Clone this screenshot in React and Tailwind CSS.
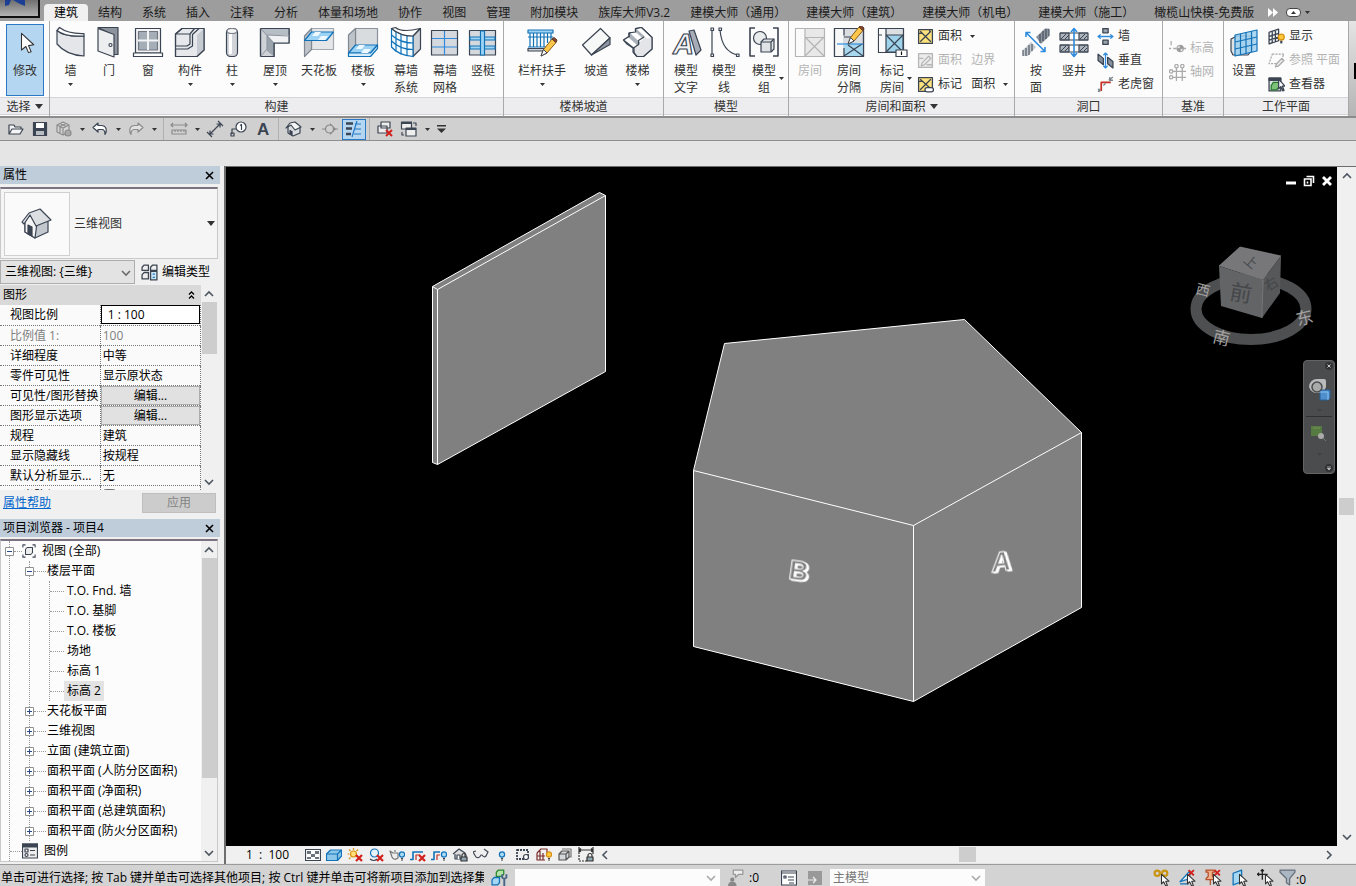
import { useState } from "react";

const INK = "#3b4452";
const BLUE = "#1272b8";

function Svg({ size = 32, box = 32, children, className = "" }) {
  return (
    <svg
      width={size}
      height={size}
      viewBox={`0 0 ${box} ${box}`}
      fill="none"
      stroke={INK}
      strokeWidth="1.2"
      strokeLinejoin="round"
      className={`shrink-0 ${className}`}
      aria-hidden="true"
    >
      {children}
    </svg>
  );
}

function Pencil() {
  return (
    <g strokeWidth="1">
      <path d="M15 30l2.5-6.5L26 13l4 3.5-9 10.5z" fill="#ffc74a" stroke="#8a5a1d" />
      <path d="M26 13l2-1.5 3 2.5-1 2.5z" fill="#8c4a2f" stroke="#5d3424" />
      <path d="M15 30l2.5-6.5 3.5 3.5z" fill="#fff" stroke="#3b4452" />
    </g>
  );
}

const ribbonIcons = {
  modify: <path d="M12 5v19l5-4 3 7 3-1-3-7 6-1z" fill="#fff" stroke="#333" />,
  wall: (
    <>
      <path d="M2 4.5Q9 11 29 10V30Q11 29 2 18z" fill="#e4e6e9" />
      <path d="M2 4.5L4.5 1.5Q13 8 29 7.5V10Q10 11 2 4.5z" fill="#fff" />
    </>
  ),
  door: (
    <>
      <path d="M5 1.5h20v27h-5V9z" fill="#8d949d" />
      <path d="M5 2.5l16 6V31L5 25z" fill="#eceef0" />
      <circle cx="17.5" cy="19" r="1.5" fill="#fff" />
    </>
  ),
  window: (
    <>
      <path d="M3.5 2.5h25V27h-25z" fill="#f4f4f5" />
      <path d="M6.5 5.5h19V24h-19z" fill="#a5adb7" stroke="#6f7883" />
      <path d="M16 5v19M6 14.5h20" stroke="#f2f3f4" strokeWidth="2" />
      <path d="M1.5 27h29v3.5h-29z" fill="#fff" />
    </>
  ),
  component: (
    <>
      <path d="M1.5 8L8 2.5h22V24l-7 6.5H1.5z" fill="#e6e8eb" />
      <path d="M23 9l7-6.5V24l-7 6.5z" fill="#c6cbd1" stroke="none" />
      <path d="M1.5 8L8 2.5h12.5L16 8v10l-3 2H1.5V8H16M1.5 23h12l5-3V8.5L25 2.5h5V24l-7 6.5H1.5z" />
    </>
  ),
  column: (
    <>
      <rect x="10.5" y="2.5" width="11" height="28" rx="4" fill="#d0d4d9" />
      <path d="M14.5 8v20" stroke="#fff" strokeWidth="3" />
      <ellipse cx="16" cy="5" rx="5" ry="2.5" fill="#f7f7f8" stroke="#7a828d" />
    </>
  ),
  roof: (
    <>
      <path d="M1.5 2.5H30V17H15v13.5H1.5z" fill="#cfd3d8" />
      <path d="M1.5 2.5L8 9h22V2.5z" fill="#b7bdc5" stroke="none" />
      <path d="M8 9h22v8H15z" fill="#f1f2f3" stroke="none" />
      <path d="M8 9l7 8v13.5L8 25z" fill="#9ba3ad" stroke="none" />
      <path d="M1.5 2.5H30V17H15v13.5H1.5z" />
      <path d="M1.5 2.5L15 17M8 9l22 1M8 9v14l-6.5 7.5" stroke="#8a929c" strokeWidth="1" />
    </>
  ),
  ceiling: (
    <>
      <path d="M8.5 2.5h22v21h-22z" fill="#e4e6e8" stroke="#a2a8b0" />
      <path d="M1.5 10l7-7.5v21l-7 7z" fill="#c0c5cb" stroke="#7f8791" />
      <path d="M1.5 14.5L8.5 6h22l-7 8.5z" fill="#9cd2f4" stroke={BLUE} />
      <path d="M9 10l3-4h6l-3 4zM15 14l3-4h7l-3 4z" fill="#eef8ff" stroke="none" />
    </>
  ),
  floor: (
    <>
      <path d="M8.5 2.5h22v18h-22z" fill="#d9dcdf" stroke="#8a929c" />
      <path d="M1.5 9l7-6.5v18l-7 8z" fill="#bfc4ca" stroke="#7f8791" />
      <path d="M1.5 27l7-8h22l-7 8z" fill="#9cd2f4" stroke={BLUE} />
      <path d="M1.5 27v3.5h22l7-8V19l-7 8z" fill="#d4ecfb" stroke={BLUE} />
      <path d="M9 23l3-4h6l-3 4zM14 27l3-4h7l-3 4z" fill="#eef8ff" stroke="none" />
    </>
  ),
  curtain: (
    <>
      <path d="M23 10l7.5-7.5V23L23 30.5z" fill="#cdd1d6" />
      <path d="M1.5 2.5Q10 10 23 10V30.5Q8 29 1.5 21z" fill="#f3fbff" stroke={BLUE} />
      <path d="M6 6v19.5M11 8.5v20M17 9.5V30M1.5 9Q10 17 23 17M1.5 15Q10 23.5 23 23.5" stroke={BLUE} />
      <path d="M1.5 2.5l4-1Q12 7 30 2.5L23 10Q10 10 1.5 2.5z" fill="#fff" />
    </>
  ),
  curtainGrid: (
    <>
      <path d="M2.5 4.5h26V29h-26z" fill="#d5d8dc" />
      <path d="M15.5 5v24M3 12.5h25M3 21h25" stroke="#2e8bdd" />
    </>
  ),
  mullion: (
    <>
      <path d="M2.5 4.5h26V29h-26z" fill="#d5d8dc" />
      <path d="M3 11h25v3H3zM3 20h25v3H3z" fill="#9fd4f5" stroke={BLUE} />
      <path d="M13.5 5h4v24h-4z" fill="#9fd4f5" stroke={BLUE} />
    </>
  ),
  railing: (
    <>
      <path d="M2 4h25v3H2zM2 11h25M2 21h18" fill="#9fd4f5" stroke={BLUE} />
      <path d="M4 7v14M7.5 7v14M11 7v14M14.5 7v14M18 7v14M21.5 7v10M25 7v7" stroke={BLUE} />
      <path d="M2 22.5h17V25H2z" fill="#cdd1d6" />
      <Pencil />
    </>
  ),
  ramp: (
    <>
      <path d="M2.5 19L20.5 2.5 30 12 11.5 29z" fill="#f6f7f7" />
      <path d="M30 12v6.5L11.5 29z" fill="#8f97a1" />
    </>
  ),
  stair: (
    <>
      <path d="M1.5 14L7 10.500V7l6.5-1V2.500l6-1 10.500 10V23l-8.500 7.500H15L11 26v-4l-6-4z" fill="#aab1b9" />
      <path d="M12 25v-3l6-4v-4l6-4 6 1.500V23l-8.500 7.5H15z" fill="#e3e5e8" stroke="none" />
      <path d="M1.5 14L6 11l9 8-3.500 3zM8.500 7.500l4-2.500 9 8-4 3zM15 3.500l4-2L30 11.500l-5 1z" fill="#fff" stroke="none" />
      <path d="M1.500 14l10 8 5-3.500v-4l5.500-3.500M1.5 14L7 10.500V7l6.5-1V2.5l6-1L30 11.500V23l-8.500 7.5H15L12 27v-5" />
    </>
  ),
  modelText: (
    <>
      <path d="M19 5l5-1 7 20-5 5z" fill="#a6adb6" />
      <text x="3" y="28" fontSize="29" fontWeight="700" fontStyle="italic" fill="#f3f4f5" className="font-['Liberation_Sans',sans-serif]">A</text>
    </>
  ),
  modelLine: (
    <>
      <path d="M4 4v25M12 4Q14 26 30 29" />
      <path d="M3 2h2.5v2.5H3zM3 28h2.5v2.5H3zM11 2h2.5v2.5H11zM28.5 28H31v2.5h-2.5z" fill="#fff" />
    </>
  ),
  modelGroup: (
    <>
      <path d="M7 2H2v28h5M25 2h5v28h-5" strokeWidth="1.6" />
      <circle cx="12" cy="12" r="6.5" fill="#e9ebed" />
      <path d="M13 16l3-3h10v10l-3 3H13z" fill="#e0e3e6" />
      <path d="M13 16h10v10M23 16l3-3" />
    </>
  ),
  room: (
    <g stroke="#b4b4b4">
      <path d="M1.5 2.5h29v28h-29z" fill="#e8e8e8" />
      <path d="M2 3h9v9H2zM2 12h8v18H2z" fill="#fafafa" stroke="none" />
      <path d="M11 2.5v9M11 26v4M11 11.5h19M11 11l19 19M30 11L11 30M11 11v19" />
    </g>
  ),
  roomSep: (
    <>
      <path d="M1.5 2.5h29v28h-29z" fill="#d9dde0" />
      <path d="M2 3h8v27H2z" fill="#f7f7f7" stroke="none" />
      <path d="M11 18h19v12H11z" fill="#a7d8ee" stroke="none" />
      <path d="M1.5 2.5h29v28h-29zM11 2.5v7M11 22v8M11 11h8M11 30l18-12M15 19l15 11" />
      <path d="M4 18h26" stroke="#2e8bdd" />
      <g transform="translate(0 -12)"><Pencil /></g>
    </>
  ),
  roomTag: (
    <>
      <path d="M2.5 2.5h25v24h-25z" fill="#dde0e3" />
      <path d="M3 3h7v23H3z" fill="#f9f9f9" stroke="none" />
      <path d="M10 9h17v17H10z" fill="#9fd3eb" />
      <path d="M10 2.5V9M10 9l17 17M27 9L10 26M3 9h3" />
      <rect x="20" y="24" width="11" height="6.5" fill="#fff" />
      <path d="M25.5 25.5V29" stroke="#111" />
    </>
  ),
  byFace: (
    <>
      <path d="M16 11l9-8.5h4v8L21 18z" fill="#8c949d" stroke="none" />
      <path d="M3 24l8-8 5 5-8 9H3z" fill="#c4c9ce" stroke="none" />
      <path d="M20 8v9M23 5v10M26 3v10M29 3v7M3 24v6M6 22v8M9 19v10M12 18v7" strokeWidth="1" />
      <path d="M6 6.5l19 19M6 11V6.5h4.5M25 21v4.5h-4.5" stroke="#2e8bdd" strokeWidth="1.6" />
    </>
  ),
  shaft: (
    <>
      <path d="M2 7h9v7H2zM2 19h9v7H2zM21 7h9v7h-9zM21 19h9v7h-9z" fill="#aeb4bb" />
      <path d="M2 7h28M2 14h28M2 19h28M2 26h28" />
      <path d="M3 13l5-5M7 13l4-4M3 25l5-5M7 25l4-4M22 13l5-5M26 13l3-3M22 25l5-5M26 25l3-3" strokeWidth="1" />
      <path d="M16 3v27M13 6l3-3.5L19 6M13 27l3 3.5 3-3.5" stroke="#2e8bdd" strokeWidth="1.6" />
    </>
  ),
  workplane: (
    <>
      <path d="M3 13l6-3h15v14l-4 5H5l-2-4z" fill="#dfe3e6" />
      <path d="M7 9L29 4v21L7 30z" fill="#9fd0ee" fillOpacity=".85" stroke={BLUE} />
      <path d="M12.5 8v21M18 6.5V28M23.5 5v21M7 16l22-5M7 23l22-5" stroke={BLUE} />
    </>
  ),
};

const smallIcons = {
  area: (
    <>
      <path d="M1.5 1.5h13v13h-13z" fill="#ffe27a" />
      <path d="M1.5 5h4M12 1.5V4M3 3l10 10M13 3L3 13" />
    </>
  ),
  areaEdge: (
    <g stroke="#b5b5b5">
      <path d="M1.5 1.5h13v13h-13z" fill="#ececec" />
      <path d="M2 6h4M4 13l1-3 6-6 2 2-6 6zM9 12h5" />
    </g>
  ),
  areaTag: (
    <>
      <path d="M1.5 1.5h13v13h-13z" fill="#ffe27a" />
      <path d="M3 3l9 8M13 3L3 13M1.5 5h4" />
      <rect x="7.5" y="11" width="8" height="4" rx="2" fill="#fff" />
    </>
  ),
  wallOpening: (
    <>
      <path d="M5.5.5h5v4h-5zM5.5 11.5h5v4h-5z" fill="#9aa2ab" />
      <path d="M1 8h14M3.5 6L1 8l2.5 2M12.5 6L15 8l-2.5 2" stroke="#2e8bdd" />
    </>
  ),
  vertical: (
    <>
      <path d="M1 2l5 4v6L1 8zM10 5l5 4v6l-5-4z" fill="#87909b" />
      <path d="M8 1v14M6 3l2-2 2 2M6 13l2 2 2-2" stroke="#2e8bdd" />
    </>
  ),
  dormer: (
    <>
      <path d="M1 15l2-3M6 9l2-2M11 4l4-3M1 12l2 3M12 1v3h3" stroke="#7c848d" />
      <path d="M4 14V6h9" stroke="#c42f22" strokeWidth="1.6" />
    </>
  ),
  level: (
    <g stroke="#aaa">
      <path d="M0 8h2M4 8h3M13 8h3M2 1v4" />
      <circle cx="10.5" cy="8" r="3" />
      <path d="M10.5 5v6M7.5 8h6" />
      <path d="M10.5 5a3 3 0 013 3h-3zM10.5 11a3 3 0 01-3-3h3z" fill="#999" stroke="none" />
    </g>
  ),
  gridLine: (
    <g stroke="#aaa">
      <circle cx="7" cy="2" r="1.6" />
      <circle cx="12.5" cy="2" r="1.6" />
      <circle cx="2" cy="7" r="1.6" />
      <circle cx="2" cy="12.5" r="1.6" />
      <path d="M7 3.5V16M12.5 3.5V16M3.5 7H16M3.5 12.5H16" />
    </g>
  ),
  show: (
    <>
      <path d="M1 4l9-3v11l-9 3zM4 3v11M7 2v11M1 8l9-3M1 11.5l9-3" fill="#f1f2f3" />
      <circle cx="12.5" cy="8.5" r="2.8" fill="#ffc93a" stroke="#d98f12" />
      <path d="M12.5 12v2.5" strokeWidth="2" />
    </>
  ),
  refPlane: (
    <g stroke="#aaa">
      <path d="M4 2h11l-4 9H1z" strokeDasharray="2 1" />
      <path d="M7 14l1-3 5-5 2 2-5 5z" fill="#ececec" />
    </g>
  ),
  viewer: (
    <>
      <path d="M1 2h11v12H1z" fill="#dfe3e6" />
      <path d="M1 2h11v2H1z" fill={INK} />
      <path d="M3 9l2-3h5v5l-2 2H3z" fill="#7fc07a" stroke="#247a2a" />
      <path d="M10 3v9l2-2 2 4 1-.5-1.5-4H16z" fill="#fff" />
    </>
  ),
};

const Lock = () => (
  <>
    <path d="M10 10V8.5a2 2 0 014 0V10" stroke="#333" />
    <path d="M9 10h6v4H9z" fill="#8fa7b0" stroke="#333" />
  </>
);
const Cross = () => <path d="M9 8l6 6M15 8l-6 6" stroke="#d0211c" strokeWidth="2.2" />;
const Bulb = ({ x = 0, color = "#a9dcf6", line = "#1272b8" }) => (
  <g transform={`translate(${x} 0)`}>
    <circle cx="12" cy="7.5" r="2.6" fill={color} stroke={line} />
    <path d="M11 11.5h2M11 13h2" stroke="#444" />
  </g>
);

const viewIcons = [
  ["详细程度", <><path d="M.5 2.5h15v11H.5z" fill="#fff" /><path d="M2 4h4v3H2zM10 4h4v3h-4zM6 7h4v3H6zM2 10h4v2H2zM10 10h4v2h-4z" fill="#6a727c" stroke="none" /></>],
  ["视觉样式", <><path d="M.5 7l4-4h11v6l-4 4.5H.5z" fill="#8cc8ea" stroke={BLUE} /><path d="M.5 7h11v6M11.5 7l4-4" stroke={BLUE} /></>],
  ["日光路径", <><circle cx="6.5" cy="7" r="3" fill="#ffe27a" stroke="#dc9310" /><path d="M6.5 1v2M.5 7h2M2 2.5l1.5 1.5M11 2.5L9.5 4M2 12l1.5-1.5" stroke="#dc9310" /><Cross /></>],
  ["阴影", <><circle cx="6.5" cy="6" r="4" fill="#e6f4fd" stroke={BLUE} /><path d="M2 12q4 3 7 0" /><Cross /></>],
  ["渲染对话框", <><path d="M1 4l3 2h5v5q-4 3-6-1zM6 5V3" fill="#eee" stroke="#777" /><Bulb x={1} /></>],
  ["裁剪视图", <><path d="M0 12.5h3V5h10M3 12V8" stroke={BLUE} strokeWidth="1.6" /><path d="M6 13V8h4" stroke="#c42f22" /><Cross /></>],
  ["显示裁剪区域", <><path d="M0 12.5h3V5h6" stroke={BLUE} strokeWidth="1.6" /><path d="M6 13V8h3" stroke="#c42f22" /><Bulb x={1} /></>],
  ["锁定三维视图", <><path d="M1 7l6-5 6 4v6H3V7" fill="#ddd" /><path d="M5 12V8h3v4" fill="#fff" /><Lock /></>],
  ["临时隐藏", <path d="M0 5l3 5q3 2 5-2h1q2 3 4 1l2-4-4-3M0 5l3-1" stroke="#444b55" />],
  ["显示隐藏的图元", <Bulb x={-4} />],
  ["临时视图属性", <><path d="M2 3h11v9H2z" fill="#eee" strokeDasharray="2 1" strokeWidth="1.8" /><circle cx="11" cy="10" r="2.5" fill="#fff" /></>],
  ["显示分析模型", <><path d="M1 6l4-4h6v7M1 6v7h8M1 9h8M4 4v9M7 6v7" stroke="#7b2e2a" /><Bulb color="#ffc93a" line="#d98f12" x={1} /></>],
  ["高亮显示位移集", <><path d="M5 2h9v8h-3" fill="#eee" stroke="#777" /><path d="M2 7l3-3h7v6l-3 3H2zM2 7h7v6M9 7l3-3" fill="#d5d8db" stroke="#555" /></>],
  ["显示约束", <><path d="M1 0v7M15 0v7M1 3h14M3 1.5L1 3l2 1.5M13 1.5L15 3l-2 1.5" stroke="#333" /><path d="M1 8v6h8" stroke="#333" strokeDasharray="2 1" /><Lock /></>],
];

const Arrow = ({ className = "" }) => (
  <svg width="5" height="3" viewBox="0 0 5 3" className={`shrink-0 ${className}`} aria-hidden="true">
    <path d="M0 0h5L2.5 3z" fill="#333" />
  </svg>
);

const BigArrow = () => (
  <svg width="8" height="5" viewBox="0 0 8 5" className="shrink-0" aria-hidden="true">
    <path d="M0 0h8L4 5z" fill="#333" />
  </svg>
);

const Chevron = ({ dir = "down", color = "#4d5560" }) => {
  const paths = { up: "M1 7l4-4 4 4", down: "M1 3l4 4 4-4", left: "M7 1L3 5l4 4", right: "M3 1l4 4-4 4" };
  return (
    <svg width="10" height="10" viewBox="0 0 10 10" fill="none" stroke={color} strokeWidth="1.6" aria-hidden="true">
      <path d={paths[dir]} />
    </svg>
  );
};

const tabs = [
  "建筑", "结构", "系统", "插入", "注释", "分析", "体量和场地", "协作", "视图", "管理", "附加模块",
  "族库大师V3.2", "建模大师（通用）", "建模大师（建筑）", "建模大师（机电）", "建模大师（施工）", "橄榄山快模-免费版",
];

function BigButton({ icon, lines, width, drop, sideDrop, disabled }) {
  return (
    <button
      type="button"
      disabled={disabled}
      className={`${width} shrink-0 flex flex-col items-center pt-[5px] ${disabled ? "text-[#b4b4b4]" : "text-[#333]"}`}
    >
      <Svg>{ribbonIcons[icon]}</Svg>
      <span className="relative mt-1 flex flex-col whitespace-nowrap leading-[17px]">
        {lines.map((l) => (
          <span key={l}>{l}</span>
        ))}
        {sideDrop && <Arrow className="absolute -right-2 bottom-4" />}
      </span>
      {drop && <Arrow className="mt-1" />}
    </button>
  );
}

function SmallButton({ icon, label, disabled, drop }) {
  return (
    <button
      type="button"
      disabled={disabled}
      className={`flex h-6 items-center gap-1 whitespace-pre ${disabled ? "text-[#b4b4b4]" : "text-[#333]"}`}
    >
      <Svg size={17} box={16}>{smallIcons[icon]}</Svg>
      {label}
      {drop && <Arrow className="ml-1" />}
    </button>
  );
}

function Panel({ title, drop, className = "", children }) {
  return (
    <section className={`flex shrink-0 flex-col border-r border-[#a9a9a9] ${className}`}>
      <div className="flex h-[76px]">{children}</div>
      <h2 className="flex h-[18px] items-center justify-center gap-1 border-y border-[#d5d5d8] bg-[#ededef] pt-px text-[#333]">
        {title}
        {drop && <BigArrow />}
      </h2>
    </section>
  );
}

function Ribbon() {
  const [active, setActive] = useState("建筑");
  return (
    <header>
      <nav className="relative flex h-[21px] items-end bg-[#9d9d9d] pl-11">
        <button
          type="button"
          aria-label="应用程序菜单"
          className="absolute left-0 top-0 h-[18px] w-10 overflow-hidden border-b-2 border-r-2 border-[#111] bg-linear-to-b from-[#6f6f6f] to-[#b3b3b3]"
        >
          <svg width="38" height="16" viewBox="0 0 38 16" className="block" aria-hidden="true">
            <path d="M5 0h6l-2 5-4 1zM13 0h12v6l-5-2z" fill="#1c3f94" />
          </svg>
        </button>
        {tabs.map((t) => (
          <button
            type="button"
            key={t}
            onClick={() => setActive(t)}
            className={`h-[17px] shrink-0 whitespace-nowrap px-2.5 leading-[17px] ${
              t === active ? "rounded-t-sm bg-[#f0f0f0] text-black" : "text-[#1b1b1b]"
            }`}
          >
            {t}
          </button>
        ))}
        <span className="ml-1 flex h-[17px] items-center gap-1">
          <svg width="10" height="9" viewBox="0 0 10 9" aria-hidden="true"><path d="M0 0l5 4.5L0 9zM5 0l5 4.5L5 9z" fill="#fff" /></svg>
          <button type="button" aria-label="最小化功能区" className="ml-1 flex h-[9px] w-[15px] items-center justify-center rounded-sm border border-[#444] bg-white">
            <Arrow className="rotate-180" />
          </button>
          <Arrow />
        </span>
      </nav>

      <div className="flex h-[97px] overflow-hidden border-b-2 border-[#8b8b8b] bg-[#fcfcfc]">
        <Panel title="选择" drop className="w-[50px]">
          <button
            type="button"
            className="ml-1.5 mt-[3px] flex h-[72px] w-[38px] flex-col items-center border border-[#2b78c5] bg-[#b5d6f0] pt-1 text-[#333]"
          >
            <Svg size={28}>{ribbonIcons.modify}</Svg>
            <span className="mt-1.5">修改</span>
          </button>
        </Panel>
        <Panel title="构建">
          <BigButton icon="wall" lines={["墙"]} width="w-[41px]" drop />
          <BigButton icon="door" lines={["门"]} width="w-9" />
          <BigButton icon="window" lines={["窗"]} width="w-[42px]" />
          <BigButton icon="component" lines={["构件"]} width="w-[42px]" drop />
          <BigButton icon="column" lines={["柱"]} width="w-[42px]" drop />
          <BigButton icon="roof" lines={["屋顶"]} width="w-11" drop />
          <BigButton icon="ceiling" lines={["天花板"]} width="w-11" />
          <BigButton icon="floor" lines={["楼板"]} width="w-11" drop />
          <BigButton icon="curtain" lines={["幕墙", "系统"]} width="w-[42px]" />
          <BigButton icon="curtainGrid" lines={["幕墙", "网格"]} width="w-9" />
          <BigButton icon="mullion" lines={["竖梃"]} width="w-10" />
        </Panel>
        <Panel title="楼梯坡道">
          <BigButton icon="railing" lines={["栏杆扶手"]} width="w-[76px]" drop />
          <BigButton icon="ramp" lines={["坡道"]} width="w-8" />
          <BigButton icon="stair" lines={["楼梯"]} width="w-[51px]" drop />
        </Panel>
        <Panel title="模型">
          <BigButton icon="modelText" lines={["模型", "文字"]} width="w-11" />
          <BigButton icon="modelLine" lines={["模型", "线"]} width="w-8" />
          <BigButton icon="modelGroup" lines={["模型", "组"]} width="w-12" sideDrop />
        </Panel>
        <Panel title="房间和面积" drop className="w-[226px]">
          <BigButton icon="room" lines={["房间"]} width="w-[42px]" disabled />
          <BigButton icon="roomSep" lines={["房间", "分隔"]} width="w-9" />
          <BigButton icon="roomTag" lines={["标记", "房间"]} width="w-[50px]" sideDrop />
          <div className="flex flex-col pt-[3px]">
            <SmallButton icon="area" label="面积" drop />
            <SmallButton icon="areaEdge" label="面积   边界" disabled />
            <SmallButton icon="areaTag" label="标记   面积" drop />
          </div>
        </Panel>
        <Panel title="洞口" className="w-[148px]">
          <BigButton icon="byFace" lines={["按", "面"]} width="w-[42px]" />
          <BigButton icon="shaft" lines={["竖井"]} width="w-[34px]" />
          <div className="flex flex-col pl-1.5 pt-[3px]">
            <SmallButton icon="wallOpening" label="墙" />
            <SmallButton icon="vertical" label="垂直" />
            <SmallButton icon="dormer" label="老虎窗" />
          </div>
        </Panel>
        <Panel title="基准" className="w-[61px]">
          <div className="flex flex-col pl-1.5 pt-[15px]">
            <SmallButton icon="level" label="标高" disabled />
            <SmallButton icon="gridLine" label="轴网" disabled />
          </div>
        </Panel>
        <Panel title="工作平面" className="w-[125px]">
          <BigButton icon="workplane" lines={["设置"]} width="w-10" />
          <div className="flex flex-col pl-1 pt-[3px]">
            <SmallButton icon="show" label="显示" />
            <SmallButton icon="refPlane" label="参照 平面" disabled />
            <SmallButton icon="viewer" label="查看器" />
          </div>
        </Panel>
        <div className="flex flex-1 flex-col items-end bg-linear-to-b from-[#e4e4e4] to-[#b5b5b5] pt-[42px]">
          <span className="h-4 w-0.5 bg-black" />
        </div>
      </div>
    </header>
  );
}

const quickItems = [
  ["打开", <path d="M1 13V4h5l1 2h6v2M1 13L4 8h11l-3 5z" fill="#f4f4f4" />],
  ["保存", <><path d="M1.5 1.5h13v13h-13z" fill={INK} /><path d="M4 2h8v5H4z" fill="#fff" stroke="none" /><path d="M4 10h8v4H4z" fill="#b9bec4" stroke="none" /></>],
  ["同步", <g stroke="#8b8b8b"><path d="M1 4l6-3 6 3v7l-6 3-6-3zM1 4l6 3 6-3M7 7v7M4 2.5l6 3M10 2.5l-6 3v7" fill="#d4d4d4" /><circle cx="12" cy="12" r="3" fill="#aaa" /></g>, true],
  ["放弃", <path d="M6 2L1 6.5 6 11V8.5h4q3 0 3 5 2-3 1-6-1-3-5-3H6z" fill="#fff" />, true],
  ["重做", <path d="M10 2l5 4.5-5 4.5V8.5H6q-3 0-3 5-2-3-1-6 1-3 5-3h3z" fill="#e2e2e2" stroke="#8b8b8b" />, true],
  null,
  ["测量", <path d="M0 4h16M2 2L0 4l2 2M14 2l2 2-2 2M1 9h14v4H1zM4 9v2M7 9v2M10 9v2M13 9v2" stroke="#8b8b8b" />, true],
  ["对齐尺寸标注", <path d="M3 13L13 3M0 11l5 5M11 0l5 5M3 13V9.5M3 13h3.5M13 3v3.5M13 3H9.5" />],
  ["按类别标记", <><path d="M1 13V8h4M0 12h3v3H0z" /><circle cx="10" cy="6" r="5" fill="#fff" /><path d="M9 4.5L10.5 3.5V9" /></>],
  ["文字", <text x="2" y="14" fontSize="17" fontWeight="700" fill={INK} stroke="none" className="font-['Liberation_Sans',sans-serif]">A</text>],
  null,
  ["默认三维视图", <><path d="M2 6v6l5 3 7-3V6" fill="#d9dce0" /><path d="M0 7l4-5 5-1 6 5-6 3-4-5z" fill="#f4f4f4" /><path d="M4 9v4l2 1v-4" fill={INK} /></>, true],
  ["剖面", <><path d="M0 8h4M12 8h4" stroke="#8b8b8b" /><path d="M8 2l6 6-6 6z" fill="#888" stroke="none" /><circle cx="7.5" cy="8" r="4" fill="#d0d0d0" stroke="#888" /></>],
  ["细线", <path d="M0 2.5h7M0 7.5h6M0 13h5" strokeWidth="2.6" />, false, true],
  null,
  ["关闭隐藏对象", <><path d="M4 1h9v6H4zM1 5h9v7H1z" fill="#eee" /><path d="M9 9l6 6M15 9l-6 6" stroke="#d0211c" strokeWidth="2" /></>],
  ["切换窗口", <><path d="M.5 1h10v7H.5zM5 7h10v8H5z" fill="#eee" /><path d="M0 2h10M5 8h10" strokeWidth="1.8" /><path d="M12 2h3v3M1 11v3h2" /></>, true],
];

function QuickBar() {
  return (
    <div className="flex h-[23px] shrink-0 items-center border-b border-[#8e8e8e] bg-[#d0d0d0] pl-1">
      {quickItems.map((item, i) => {
        if (!item) return <span key={i} className="mx-[3px] h-full w-px bg-[#b0b0b0]" />;
        const [label, icon, drop, on] = item;
        return (
          <button
            type="button"
            key={label}
            title={label}
            aria-label={label}
            className={`flex h-[21px] items-center ${on ? "border border-[#2b78c5] bg-[#b5d6f0]" : ""}`}
          >
            <span className={`flex justify-center ${on ? "w-[22px]" : "w-6"}`}>
              <Svg size={16} box={16} className="overflow-visible">
                {icon}
                {on && <path d="M9 3h6M9 8h6M8 13h7M11 0L6 16" stroke="#2379c9" />}
              </Svg>
            </span>
            {drop && <span className="flex w-3 justify-center"><Arrow /></span>}
          </button>
        );
      })}
      <button type="button" aria-label="自定义快速访问工具栏" className="ml-1">
        <svg width="9" height="8" viewBox="0 0 9 8" aria-hidden="true"><path d="M0 0h9v1.5H0zM0 3.5h9L4.5 8z" fill="#333" /></svg>
      </button>
    </div>
  );
}

function PaneTitle({ children }) {
  return (
    <div className="flex h-[18px] shrink-0 items-center justify-between bg-[#bfcddb] pl-[3px] pr-1.5 text-black">
      <h2>{children}</h2>
      <button type="button" aria-label="关闭">
        <svg width="9" height="9" viewBox="0 0 9 9" stroke="#000" strokeWidth="1.6" aria-hidden="true"><path d="M1 1l7 7M8 1L1 8" /></svg>
      </button>
    </div>
  );
}

function SideScroll({ thumb }) {
  return (
    <div className="flex w-4 shrink-0 flex-col items-center bg-[#f0f0f0]">
      <span className="flex h-[17px] items-center"><Chevron dir="up" /></span>
      <span className={`w-[15px] bg-[#cdcdcd] ${thumb}`} />
      <span className="mt-auto flex h-[17px] items-center"><Chevron /></span>
    </div>
  );
}

const properties = [
  { name: "视图比例", value: "1 : 100", kind: "input" },
  { name: "比例值 1:", value: "100", muted: true },
  { name: "详细程度", value: "中等" },
  { name: "零件可见性", value: "显示原状态" },
  { name: "可见性/图形替换", value: "编辑...", kind: "button" },
  { name: "图形显示选项", value: "编辑...", kind: "button" },
  { name: "规程", value: "建筑" },
  { name: "显示隐藏线", value: "按规程" },
  { name: "默认分析显示...", value: "无" },
  { name: "日光路径", value: "", kind: "check" },
];

function PropertyValue({ row }) {
  if (row.kind === "input") {
    return <input aria-label={row.name} defaultValue={row.value} className="block h-[19px] w-full border border-black bg-white px-1.5" />;
  }
  if (row.kind === "button") {
    return (
      <button type="button" aria-label={`${row.name} ${row.value}`} className="block h-[19px] w-full border border-[#adadad] bg-[#e1e1e1] leading-[17px]">
        {row.value}
      </button>
    );
  }
  if (row.kind === "check") return <input type="checkbox" aria-label={row.name} className="ml-0.5 block" />;
  return <span className="pl-0.5">{row.value}</span>;
}

function Properties() {
  return (
    <section className="flex shrink-0 flex-col">
      <PaneTitle>属性</PaneTitle>
      <div className="mr-0.5 mt-[3px] flex h-[72px] items-center border border-t-2 border-[#c9c9c9] border-t-[#7b7480] bg-[#f5f5f6] pl-[3px] pr-0.5">
        <div className="flex h-16 w-[66px] items-center justify-center border border-[#d0d0d0] bg-[#fafafa]">
          <Svg>
            <path d="M4 14v10l10 6 13-6V13z" fill="#c3c8ce" />
            <path d="M4 14l5-8 7 9-2 15-10-6z" fill="#f5f5f5" />
            <path d="M1 14L8 5l11-4 11 11-15 6-6-11-6 9z" fill="#dcdfe2" />
            <path d="M7 17l4 2v9l-4-2z" fill={INK} />
          </Svg>
        </div>
        <span className="ml-1 flex-1 text-[#333]">三维视图</span>
        <BigArrow />
      </div>
      <div className="flex h-[26px] items-center">
        <div className="relative">
          <select aria-label="视图" className="h-6 w-[135px] appearance-none border border-[#adadad] bg-[#e3e3e3] px-1">
            <option>{"三维视图: {三维}"}</option>
          </select>
          <span className="pointer-events-none absolute right-1 top-2">
            <Chevron color="#6b6b6b" />
          </span>
        </div>
        <button type="button" className="ml-1.5 flex items-center gap-1">
          <Svg size={17} box={16}>
            <path d="M1 3l2-2h4v5H1zM9 3l2-2h4v5H9zM1 10l2-2h4v6H1z" fill="#eee" />
            <path d="M9 7h6v8H9z" fill="#cfe6f7" />
            <path d="M11 9.5h2M11 12.5h2" stroke={BLUE} />
          </Svg>
          编辑类型
        </button>
      </div>
      <div className="flex h-[205px] overflow-hidden pr-[3px]">
        <div className="flex-1 bg-[#fafafa]">
          <div className="flex h-5 items-center justify-between bg-[#d9d9d9] pl-[3px] pr-1.5 text-black">
            图形
            <svg width="7" height="8" viewBox="0 0 7 8" fill="none" stroke="#000" strokeWidth="1.3" aria-hidden="true"><path d="M1 3.5l2.5-2.5L6 3.5M1 7.5L3.5 5 6 7.5" /></svg>
          </div>
          <table className="w-full table-fixed border-collapse">
            <tbody>
              {properties.map((row) => (
                <tr key={row.name} className={`h-5 border-b border-dotted border-[#777] ${row.muted ? "text-[#808080]" : "text-black"}`}>
                  <th scope="row" className="h-5 w-1/2 overflow-hidden whitespace-nowrap border-r border-dotted border-[#777] p-0 pl-2.5 text-left font-normal leading-[19px]">
                    {row.name}
                  </th>
                  <td className="h-5 whitespace-nowrap border-r border-dotted border-[#777] p-0 leading-[19px]">
                    <PropertyValue row={row} />
                  </td>
                </tr>
              ))}
            </tbody>
          </table>
        </div>
        <SideScroll thumb="h-[52px]" />
      </div>
      <div className="flex h-[26px] items-center justify-between bg-[#f0f0f0] pl-[3px] pr-1">
        <a href="#help" className="text-[#0066cc] underline">属性帮助</a>
        <button type="button" disabled className="h-5 w-[74px] border border-[#bfbfbf] bg-[#cccccc] leading-[18px] text-[#858585]">
          应用
        </button>
      </div>
    </section>
  );
}

function Expander({ open }) {
  return (
    <svg width="9" height="9" viewBox="0 0 9 9" className="-ml-[5px] shrink-0" aria-hidden="true">
      <path d="M.5.5h8v8h-8z" fill="#fff" stroke="#919191" />
      <path d={open ? "M2 4.5h5" : "M2 4.5h5M4.5 2v5"} stroke="#2b4a8b" />
    </svg>
  );
}

const Dash = ({ width }) => <span className={`shrink-0 border-t border-dotted border-[#999] ${width}`} />;

const levels = ["T.O. Fnd. 墙", "T.O. 基脚", "T.O. 楼板", "场地", "标高 1", "标高 2"];
const planGroups = [
  "天花板平面", "三维视图", "立面 (建筑立面)", "面积平面 (人防分区面积)",
  "面积平面 (净面积)", "面积平面 (总建筑面积)", "面积平面 (防火分区面积)",
];

function Browser() {
  const [selected, setSelected] = useState("标高 2");
  return (
    <section className="mt-[3px] flex min-h-0 flex-1 flex-col">
      <PaneTitle>项目浏览器 - 项目4</PaneTitle>
      <div className="mr-0.5 mt-0.5 flex min-h-0 flex-1 overflow-hidden border border-t-2 border-[#c9c9c9] border-t-[#7b7480] bg-[#fcfcfc] text-black">
        <ul className="ml-2 flex-1 self-stretch whitespace-nowrap border-l border-dotted border-[#999]">
          <li>
            <div className="flex h-5 items-center">
              <Expander open />
              <Dash width="w-2" />
              <Svg size={14} box={16}>
                <path d="M4 1H1v3M12 1h3v3M4 15H1v-3M12 15h3v-3" />
                <path d="M4 6l2-2h6v6l-2 2H4z" fill="#eee" />
              </Svg>
              <span className="ml-1.5">视图 (全部)</span>
            </div>
            <ul className="ml-[19px] border-l border-dotted border-[#999]">
              <li>
                <div className="flex h-5 items-center">
                  <Expander open />
                  <Dash width="w-3" />
                  <span className="ml-px">楼层平面</span>
                </div>
                <ul className="ml-[19px] border-l border-dotted border-[#999]">
                  {levels.map((l) => (
                    <li key={l} className="flex h-5 items-center">
                      <Dash width="w-[14px]" />
                      <button type="button" onClick={() => setSelected(l)} className={`h-5 px-[3px] ${l === selected ? "bg-[#e3e3e3]" : ""}`}>
                        {l}
                      </button>
                    </li>
                  ))}
                </ul>
              </li>
              {planGroups.map((g) => (
                <li key={g} className="flex h-5 items-center">
                  <Expander />
                  <Dash width="w-3" />
                  <span className="ml-px">{g}</span>
                </li>
              ))}
            </ul>
          </li>
          <li className="flex h-5 items-center">
            <Dash width="w-3" />
            <Svg size={16} box={16}>
              <path d="M.5 1h15v14H.5z" fill="#eee" />
              <path d="M.5 1h15v3H.5z" fill={INK} />
              <path d="M3 6h3v3H3zM8 7.5h5M8 12h5" />
              <circle cx="4.5" cy="12" r="1.5" />
            </Svg>
            <span className="ml-1.5">图例</span>
          </li>
        </ul>
        <SideScroll thumb="h-[220px]" />
      </div>
    </section>
  );
}

function Model() {
  return (
    <svg viewBox="226 167 1111 679" className="block h-full w-full" fill="#808080" stroke="#fff" strokeWidth="1" aria-hidden="true">
      <path d="M432.5 286.5L599.5 192.5 605.5 195.5V371.5L437.5 464.5 432.5 462.5z" />
      <path d="M432.5 286.5L437.5 289.5 605.5 195.5M437.5 289.5V464.5" fill="none" />
      <path d="M724.5 343.5L964.5 319.5 1081.5 432.5V607.5L913.5 701.5 693.5 646.5V470.5z" />
      <path d="M693.5 470.5L913.5 525.5 1081.5 432.5M913.5 525.5V701.5" fill="none" />
      <g fontSize="27" fontWeight="700" className="font-['Liberation_Sans',sans-serif]">
        <text x="789" y="580" transform="rotate(8 798 571)" className="drop-shadow-[2px_1px_0_#fff]">B</text>
        <text x="991" y="571" fontStyle="italic" transform="rotate(-8 1001 561)" className="drop-shadow-[2px_1px_0_#fff]">A</text>
      </g>
      <g stroke="none">
        <ellipse cx="1251" cy="309" rx="55" ry="30.5" fill="none" stroke="#4d4f50" strokeWidth="11" />
        <path d="M1219 266L1240 247 1281 256 1263 280z" fill="#77777a" />
        <path d="M1219 266L1263 280 1262 318 1221 306z" fill="#636466" />
        <path d="M1281 256L1280 293 1262 318 1263 280z" fill="#57585a" />
        <path d="M1219 266L1240 247 1281 256M1263 280L1262 318" fill="none" stroke="#8b8b8d" strokeWidth=".7" />
        <g fill="#a3a0a0" fontSize="17" className="font-['Noto_Sans_CJK_SC',sans-serif]">
          <text x="1213" y="344" transform="rotate(14 1222 338)">南</text>
          <text x="1296" y="324" transform="rotate(-14 1304 318)">东</text>
          <text x="1196" y="295" fontSize="14" transform="rotate(14 1203 290)">西</text>
        </g>
        <g fill="#45474a" className="font-['Noto_Sans_CJK_SC',sans-serif]">
          <text x="1230" y="301" fontSize="22" transform="rotate(10 1241 293)">前</text>
          <text x="1264" y="289" fontSize="14" transform="rotate(-30 1271 284)">右</text>
          <text x="1244" y="266" fontSize="13" transform="rotate(40 1250 262)">上</text>
        </g>
      </g>
    </svg>
  );
}

function Viewport() {
  return (
    <main className="relative min-h-0 flex-1 overflow-hidden bg-black">
      <Model />
      <div className="absolute right-1 top-2 flex items-center gap-1.5">
        <button type="button" aria-label="最小化"><svg width="12" height="12" viewBox="0 0 12 12"><path d="M1 6.5h10v3H1z" fill="#fff" /></svg></button>
        <button type="button" aria-label="还原">
          <svg width="12" height="12" viewBox="0 0 12 12" fill="none" stroke="#fff" strokeWidth="1.6"><path d="M1.5 4H8v6.5H1.5zM3.5 1.5h7V8M4.5 6.5v2" /></svg>
        </button>
        <button type="button" aria-label="关闭视图"><svg width="12" height="12" viewBox="0 0 12 12" stroke="#fff" strokeWidth="2.8"><path d="M2 2l8 8M10 2l-8 8" /></svg></button>
      </div>
      <div className="absolute right-0.5 top-[193px] flex h-[114px] w-8 flex-col items-center rounded border border-[#626466] bg-[#4a4c4d]">
        <button type="button" aria-label="关闭导航栏" className="self-end p-px">
          <svg width="8" height="8" viewBox="0 0 8 8"><circle cx="4" cy="4" r="4" fill="#333" /><path d="M2.5 2.5l3 3M5.5 2.5l-3 3" stroke="#ccc" /></svg>
        </button>
        <button type="button" aria-label="全导航控制盘" className="mt-1.5">
          <svg width="24" height="24" viewBox="0 0 24 24">
            <path d="M2 10a8 8 0 018-8h7q2 0 2 2v6a9 9 0 01-17 0z" fill="#bbb" />
            <circle cx="10" cy="10" r="5" fill="#aaa" stroke="#4a4c4d" strokeWidth="1.5" />
            <path d="M13 15l2-2h8v8l-2 2h-8z" fill="#4f8fcc" stroke="#275f9c" />
            <path d="M13 15h8v8" fill="none" stroke="#8cc0ee" />
          </svg>
        </button>
        <Arrow className="mt-2 opacity-40" />
        <span className="mt-1 h-px w-[26px] bg-[#2f3031]" />
        <button type="button" aria-label="缩放" className="mt-2">
          <svg width="18" height="16" viewBox="0 0 18 16"><path d="M1 1h11v10H1z" fill="#557b43" /><path d="M3 3h7" stroke="#7a8f55" /><circle cx="11" cy="11" r="3" fill="#aaa" /><path d="M13 13l3 3" stroke="#777" /></svg>
        </button>
        <Arrow className="mt-3 opacity-40" />
        <button type="button" aria-label="自定义导航栏" className="mt-auto self-end p-px">
          <svg width="8" height="8" viewBox="0 0 8 8"><circle cx="4" cy="4" r="4" fill="#333" /><path d="M2 3h4M2.5 4.5h3L4 6z" stroke="#ccc" fill="#ccc" strokeWidth=".7" /></svg>
        </button>
      </div>
    </main>
  );
}

function ViewBar() {
  return (
    <div className="flex h-[17px] shrink-0 items-center bg-[#f0f0f0]">
      <span className="w-[76px] shrink-0 whitespace-pre pl-5 text-black">1  :  100</span>
      {viewIcons.map(([label, icon]) => (
        <button type="button" key={label} title={label} aria-label={label} className="flex w-[21px] shrink-0 justify-center">
          <Svg size={16} box={16}>{icon}</Svg>
        </button>
      ))}
      <span className="ml-1 flex flex-1 items-center pr-[22px]">
        <Chevron dir="left" />
        <span className="ml-[349px] h-[15px] w-[17px] bg-[#cdcdcd]" />
        <span className="ml-auto"><Chevron dir="right" /></span>
      </span>
    </div>
  );
}

const pointer = <path d="M8 5v9l2-2 2 4 1.5-.5-1.5-4h3z" fill="#fff" stroke="#333" strokeWidth="1" />;
const redCross = <path d="M9 1l5 5M14 1L9 6" stroke="#d0211c" strokeWidth="1.8" />;
const selectionTools = [
  ["选择链接", <><circle cx="4" cy="4" r="2.5" stroke="#c99512" strokeWidth="2" /><circle cx="11" cy="4" r="2.5" stroke="#c99512" strokeWidth="2" />{pointer}</>],
  ["选择基线图元", <><path d="M1 12L10 2v7zM1 14h8" fill="#dff0fb" stroke={BLUE} />{redCross}{pointer}</>],
  ["选择锁定图元", <><path d="M1 1h8v2H7v4l2 2v1H1V9l2-2V3H1zM5 10v5" fill="#f2b48f" stroke="#b5522a" />{redCross}{pointer}</>],
  ["按面选择图元", <><path d="M2 4l8-3v11l-8 3z" fill="#a7d8f3" stroke={BLUE} />{pointer}</>],
  ["选择时拖曳图元", <><path d="M5 0v10M0 5h10M3.5 2L5 .5 6.5 2M2 3.5L.5 5 2 6.5" stroke="#222" />{pointer}</>],
];

function StatusBar() {
  return (
    <footer className="flex h-[22px] shrink-0 items-center overflow-hidden border-t border-[#9b9b9b] bg-[#d3d3d3] pt-1 text-black">
      <p className="w-[484px] shrink-0 overflow-hidden whitespace-nowrap pl-px">
        单击可进行选择; 按 Tab 键并单击可选择其他项目; 按 Ctrl 键并单击可将新项目添加到选择集
      </p>
      <button type="button" aria-label="工作集" className="mx-[7px] shrink-0">
        <Svg size={17} box={16}>
          <path d="M5 3l2-2h5v4l-2 2H5z" fill="#b6e2ac" stroke="#2c8a2c" />
          <path d="M1 10l2-2h5v5l-2 2H1z" fill="#a7d8f3" stroke={BLUE} />
          <path d="M12.5 9v7M10.5 5v3l2 1.5 2-1.5V5" stroke="#476785" strokeWidth="1.8" />
        </Svg>
      </button>
      <div className="relative shrink-0">
        <select aria-label="活动工作集" className="h-[18px] w-[205px] appearance-none bg-[#fcfcfc]"><option /></select>
        <span className="pointer-events-none absolute right-1 top-1"><Chevron color="#aaa" /></span>
      </div>
      <button type="button" aria-label="编辑请求" className="ml-2 flex w-12 shrink-0 items-center gap-1">
        <Svg size={17} box={16}>
          <path d="M5 1h9v4h-4l-3 3V5H5z" fill="#eee" stroke="#999" />
          <circle cx="4" cy="10" r="2" fill="#888" stroke="none" />
          <path d="M0 16q0-4 4-4t4 4z" fill="#888" stroke="none" />
        </Svg>
        :0
      </button>
      <button type="button" aria-label="设计选项" className="flex w-[26px] shrink-0 justify-center">
        <Svg size={16} box={16}><path d="M.5 1h15v14H.5z" fill="#fff" /><path d="M.5 3h15M3 6h2v2H3zM7 7h6M7 10h6M8 13h5" /></Svg>
      </button>
      <button type="button" aria-label="添加到集" disabled className="flex w-[26px] shrink-0 justify-center">
        <Svg size={16} box={16}><path d="M1 1h14v14H1z" fill="#999" stroke="none" /><path d="M1 10h8M6 7l3 3-3 3" stroke="#eee" /></Svg>
      </button>
      <div className="relative ml-0.5 shrink-0">
        <select aria-label="活动设计选项" className="h-[18px] w-[155px] appearance-none bg-[#fcfcfc] px-[3px] text-[#777]">
          <option>主模型</option>
        </select>
        <span className="pointer-events-none absolute right-1 top-1"><Chevron color="#aaa" /></span>
      </div>
      <div className="ml-auto flex shrink-0 items-center pr-[50px]">
        {selectionTools.map(([label, icon]) => (
          <button type="button" key={label} title={label} aria-label={label} className="flex w-[26px] justify-center">
            <Svg size={17} box={16}>{icon}</Svg>
          </button>
        ))}
        <button type="button" aria-label="过滤器" className="flex items-center">
          <Svg size={17} box={16}><path d="M1 1h14v2l-5 6v6l-3-2V9L1 3z" fill="#aab6c1" stroke="#65707b" /></Svg>
          <span className="pt-1">:0</span>
        </button>
      </div>
    </footer>
  );
}

export default function App() {
  return (
    <div className="flex h-screen flex-col overflow-hidden bg-[#e5e5e5] font-['Open_Sans','Noto_Sans_CJK_SC',sans-serif] text-[12px] leading-[16px]">
      <Ribbon />
      <QuickBar />
      <div className="h-[25px] shrink-0" />
      <div className="flex min-h-0 flex-1">
        <aside className="flex w-[226px] shrink-0 flex-col border-r-2 border-[#6e6e6e] bg-[#f0f0f0] pb-0.5 pr-1">
          <Properties />
          <Browser />
        </aside>
        <div className="flex min-w-0 flex-1 flex-col border-t border-[#6e6e6e] pb-px">
          <div className="flex min-h-0 flex-1">
            <Viewport />
            <div className="flex w-[19px] shrink-0 flex-col items-center bg-[#f0f0f0] py-1">
              <Chevron dir="up" />
              <span className="my-auto h-[17px] w-[15px] bg-[#cdcdcd]" />
              <Chevron />
            </div>
          </div>
          <ViewBar />
        </div>
      </div>
      <StatusBar />
    </div>
  );
}
